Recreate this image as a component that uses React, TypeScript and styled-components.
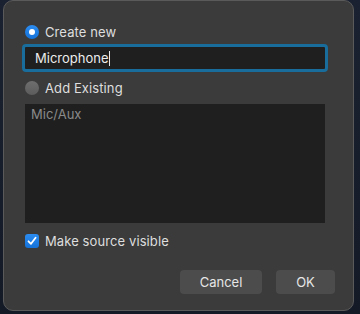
import { FC } from "react";
import styled, { createGlobalStyle } from "styled-components";

const GlobalStyle = createGlobalStyle`
  html, body {
    margin: 0;
    padding: 0;
    background: #161c28;
  }
  body {
    font-family: Inter, "Noto Sans", "Liberation Sans", sans-serif;
    -webkit-font-smoothing: antialiased;
  }
`;

const Desktop = styled.div`
  width: 360px;
  height: 314px;
  padding-left: 3px;
  box-sizing: border-box;
  overflow: hidden;
  background: linear-gradient(180deg, #1a2130 0%, #141a26 100%);
`;

const Window = styled.div`
  width: 351px;
  height: 311px;
  box-sizing: border-box;
  background: #3b3b3b;
  border: 1px solid #5a5a5a;
  border-radius: 10px;
  padding: 23px 28px 0 21px;
  display: flex;
  flex-direction: column;
  color: #dedede;
  font-size: 13px;
`;

const OptionRow = styled.label<{ $gap?: number }>`
  display: flex;
  align-items: center;
  gap: 6px;
  height: 16px;
  margin-top: ${(p) => p.$gap ?? 0}px;
  letter-spacing: 0.1px;
`;

const Radio = styled.span<{ $on?: boolean }>`
  width: 14px;
  height: 14px;
  border-radius: 50%;
  box-sizing: border-box;
  display: flex;
  align-items: center;
  justify-content: center;
  background: ${(p) =>
    p.$on ? "linear-gradient(180deg, #2c8cf0, #1472d8)" : "linear-gradient(180deg, #6e6e6e, #5c5c5c)"};
  &::after {
    content: "";
    width: 6px;
    height: 6px;
    border-radius: 50%;
    background: #fff;
    display: ${(p) => (p.$on ? "block" : "none")};
  }
`;

const NameInput = styled.div`
  margin-top: 4px;
  margin-left: -3px;
  width: 306px;
  height: 28px;
  box-sizing: border-box;
  border: 3px solid #186d9c;
  border-radius: 4px;
  background: #1f1f1f;
  display: flex;
  align-items: center;
  padding-left: 10px;
  color: #ececec;
  font-size: 13px;
`;

const Caret = styled.span`
  display: inline-block;
  width: 1px;
  height: 15px;
  background: #e8e8e8;
`;

const SourceList = styled.div`
  margin-top: 8px;
  width: 300px;
  height: 119px;
  background: #1f1f1f;
  box-sizing: border-box;
  padding: 2px 6px;
  color: #8a8a8a;
  font-size: 13px;
`;

const CheckBox = styled.span`
  width: 14px;
  height: 14px;
  border-radius: 3px;
  background: linear-gradient(180deg, #2c8cf0, #1472d8);
  display: flex;
  align-items: center;
  justify-content: center;
`;

const Footer = styled.div`
  margin-top: 21px;
  display: flex;
  justify-content: flex-end;
  gap: 14px;
  margin-right: -10px;
`;

const Button = styled.button<{ $w: number }>`
  width: ${(p) => p.$w}px;
  height: 24px;
  border: none;
  border-radius: 4px;
  background: #4c4c4c;
  color: #e6e6e6;
  font-family: inherit;
  font-size: 13px;
  padding: 0;
`;

const App: FC = () => {
  return (
    <>
      <GlobalStyle />
      <Desktop>
        <Window>
          <OptionRow>
            <Radio $on />
            Create new
          </OptionRow>
          <NameInput>
            Microphone
            <Caret />
          </NameInput>
          <OptionRow $gap={8}>
            <Radio />
            Add Existing
          </OptionRow>
          <SourceList>Mic/Aux</SourceList>
          <OptionRow $gap={10}>
            <CheckBox>
              <svg width="10" height="10" viewBox="0 0 10 10">
                <path
                  d="M1.5 5.3 L4 7.8 L8.6 1.8"
                  fill="none"
                  stroke="#fff"
                  strokeWidth="1.8"
                  strokeLinecap="round"
                  strokeLinejoin="round"
                />
              </svg>
            </CheckBox>
            Make source visible
          </OptionRow>
          <Footer>
            <Button $w={82}>Cancel</Button>
            <Button $w={59}>OK</Button>
          </Footer>
        </Window>
      </Desktop>
    </>
  );
};

export default App;
